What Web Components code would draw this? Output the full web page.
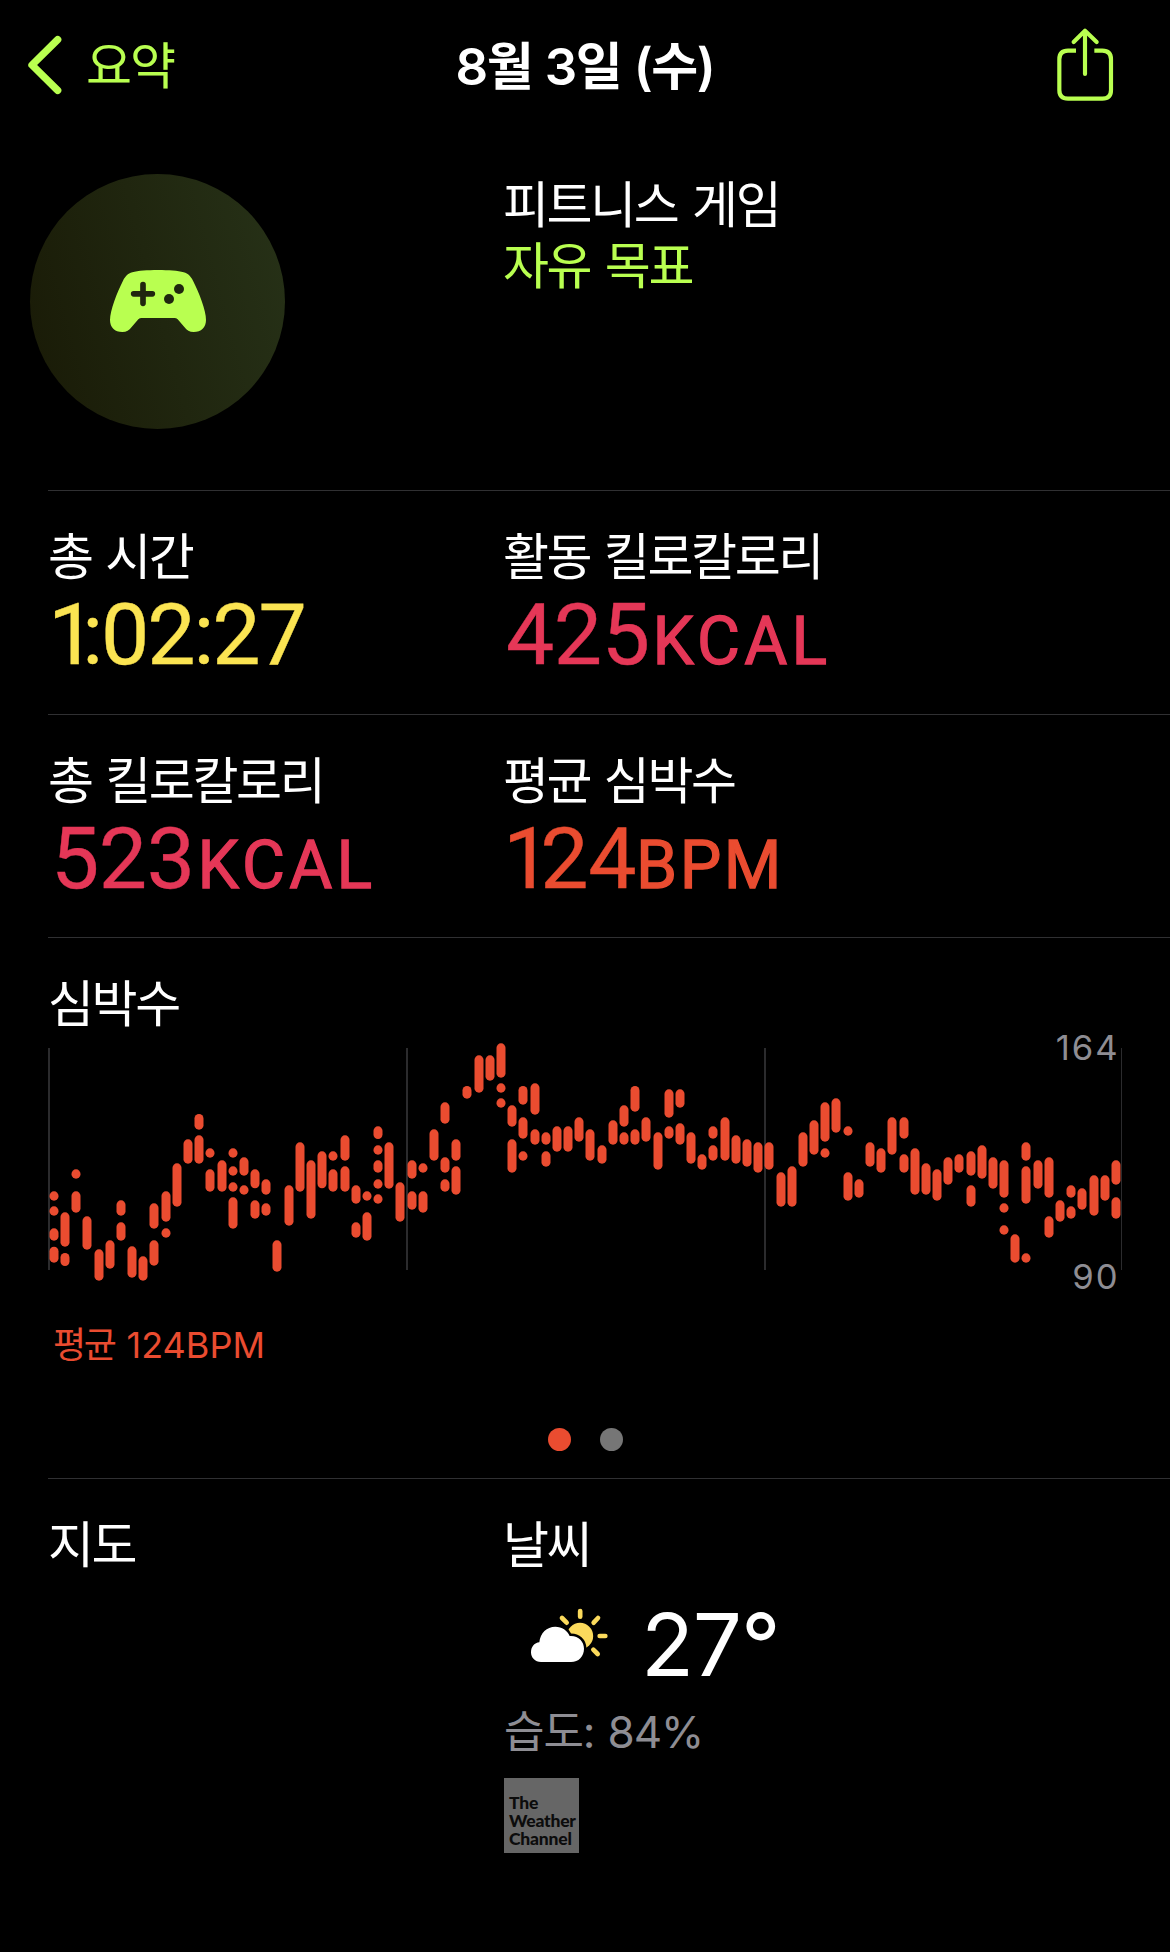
<!DOCTYPE html>
<html lang="ko">
<head>
<meta charset="utf-8">
<title>8월 3일 (수)</title>
<style>
    body {
        margin: 0;
        background: #000;
        color: #fff;
        font-family: Inter, "Noto Sans CJK KR", sans-serif;
        --accent: #b9ff50;
        --yellow: #fbe452;
        --pink: #e53757;
        --orange: #ea4c30;
        --gray: #8e8d93;
        --line: #303032;
    }
</style>
</head>
<body>
<workout-page></workout-page>

<script>
(() => {

    /**
     * Base class: clones the template given by the component in an open shadow root
     */
    class BaseElement extends HTMLElement {
        constructor(){
            super()
            this.root = this.attachShadow({mode: 'open'})
            const template = document.createElement("template")
            template.innerHTML = this.constructor.template
            this.root.appendChild(template.content.cloneNode(true))
        }
    }

    /**
     * @component nav-header
     * Back link, centered title (default slot) and share button
     */
    customElements.define("nav-header", class extends BaseElement {
        static template = `
            <style>
                :host {
                    display: grid;
                    grid-template-columns: 1fr auto 1fr;
                    align-items: center;
                    height: 130px;
                    font-size: 50px;
                    line-height: 60px;
                }

                .back, .share {
                    display: flex;
                    align-items: center;
                    color: var(--accent);
                }

                .back {
                    padding-left: 24px;
                    gap: 22px;
                    letter-spacing: -2px;
                }

                .back slot {
                    display: block;
                    padding-top: 2px;
                }

                .share {
                    justify-content: flex-end;
                    padding-right: 53px;
                }

                .title {
                    padding-top: 3px;
                    font-size: 51px;
                    font-weight: 600;
                    letter-spacing: -1.4px;
                    word-spacing: 1px;
                }

                svg {
                    display: block;
                    fill: none;
                    stroke: currentColor;
                    stroke-linecap: round;
                    stroke-linejoin: round;
                }
            </style>
            <div class="back">
                <svg width="40" height="64" viewBox="42 41 120 192" stroke-width="22">
                    <path d="M143 61 66 137l77 76"/>
                </svg>
                <slot name="back"></slot>
            </div>
            <div class="title"><slot></slot></div>
            <div class="share">
                <svg width="64" height="80" viewBox="39 28 192 240" stroke-width="12.5">
                    <path d="M135 46v129M101 79l34-34 35 34"/>
                    <path stroke-linecap="butt" d="M108 105H84q-26 0-26 26v92q0 26 26 26h103q26 0 26-26v-92q0-26-26-26h-24"/>
                </svg>
            </div>
        `
    })

    /**
     * @component workout-hero
     * Round activity badge with the workout name and its goal
     */
    customElements.define("workout-hero", class extends BaseElement {
        static template = `
            <style>
                :host {
                    display: grid;
                    grid-template-columns: 473px 1fr;
                    height: 360px;
                    padding: 44px 0 0 30px;
                    box-sizing: border-box;
                    font-size: 50px;
                    line-height: 61px;
                    letter-spacing: -2.4px;
                    word-spacing: 3px;
                }

                .badge {
                    display: flex;
                    align-items: center;
                    justify-content: center;
                    width: 255px;
                    height: 255px;
                    border-radius: 50%;
                    background: linear-gradient(75deg, #191a06, #273218);
                }

                .names {
                    padding-top: 1px;
                }

                .goal {
                    color: var(--accent);
                }
            </style>
            <div class="badge">
                <svg width="98" height="64" viewBox="57 60 294 192">
                    <path fill="#b9ff50" d="M204 60c32 0 60 2 77 7 14 4 21 12 28 25 18 36 39 88 39 118 0 22-14 36-37 36-13 0-20-5-28-15l-20-23q-4-4-10-4h-98q-6 0-10 4l-20 23c-8 10-15 15-28 15-23 0-37-14-37-36 0-30 21-82 39-118 7-13 14-21 28-25 17-5 45-7 77-7z"/>
                    <path fill="none" stroke="#20260f" stroke-width="17" stroke-linecap="round" d="M131 131.500h56M159 104v56"/>
                    <circle fill="#20260f" cx="237" cy="147" r="15"/>
                    <circle fill="#20260f" cx="267" cy="117" r="15"/>
                </svg>
            </div>
            <div class="names">
                <div><slot></slot></div>
                <div class="goal"><slot name="goal"></slot></div>
            </div>
        `
    })

    /**
     * @component detail-section
     * Block with a separator on top, its children flow in two columns
     */
    customElements.define("detail-section", class extends BaseElement {
        static template = `
            <style>
                :host {
                    display: grid;
                    grid-template-columns: 455px 1fr;
                    align-content: start;
                    height: 223.5px;
                    margin-left: 48px;
                    padding-top: 36px;
                    box-sizing: border-box;
                    border-top: 1px solid var(--line);
                }

                :host([wide]) {
                    display: block;
                    height: 541px;
                }

                :host([last]) {
                    height: 474px;
                }
            </style>
            <slot></slot>
        `
    })

    customElements.define("section-label", class extends BaseElement {
        static template = `
            <style>
                :host {
                    display: block;
                    font-size: 50px;
                    line-height: 60px;
                    letter-spacing: -2.4px;
                    word-spacing: 2px;
                    white-space: nowrap;
                }
            </style>
            <slot></slot>
        `
    })

    /**
     * @component metric-cell
     * Label (slot "label"), value (default slot) and smaller unit (slot "unit")
     */
    customElements.define("metric-cell", class extends BaseElement {
        static template = `
            <style>
                :host {
                    display: block;
                }

                .value {
                    margin-top: 6px;
                    font-family: Roboto, sans-serif;
                    font-size: 86px;
                    line-height: 84px;
                    letter-spacing: -0.5px;
                    white-space: nowrap;
                    -webkit-text-stroke: 0.4px currentColor;
                }

                .unit {
                    font-size: 66px;
                    line-height: 1;
                    letter-spacing: 2.5px;
                    -webkit-text-stroke-width: 1.3px;
                }

                :host([tone=yellow]) .value {
                    color: var(--yellow);
                    letter-spacing: -2.1px;
                }

                :host([tone=orange]) .value { color: var(--orange); }

                :host([tone=pink]) .value {
                    padding-left: 3px;
                    color: var(--pink);
                }

                :host([tone=pink]) .unit {
                    margin-left: 3px;
                    letter-spacing: 4.2px;
                }
            </style>
            <section-label><slot name="label"></slot></section-label>
            <div class="value"><slot></slot><span class="unit"><slot name="unit"></slot></span></div>
        `
    })

    // one entry per time slice: list of [top, bottom] ranges, in chart units
    const HEART_RATE = [
        [[514,542],[559,587],[625,662],[680,728]], [[577,680],[699,738]], [[448,476],[514,578]], [[589,689]],
        [[688,782]], [[661,746]], [[541,587],[607,662]], [[679,773]],
        [[709,782]], [[550,626],[661,737]], [[514,605],[625,653]], [[430,560]],
        [[358,431]], [[282,329],[346,431]], [[385,413],[448,515]], [[421,515]],
        [[385,413],[439,467],[487,515],[532,626]], [[412,467],[496,524]], [[448,505],[541,596]], [[478,524],[550,587]],
        [[661,755]], [[496,617]], [[367,515]], [[421,596]],
        [[394,505]], [[394,422],[448,515]], [[346,422],[439,515]], [[496,551],[607,653]],
        [[514,542],[577,662]], [[319,357],[376,404],[421,458],[478,506],[523,551]], [[367,506]], [[487,605]],
        [[421,476],[514,569]], [[430,458],[514,578]], [[328,422]], [[247,311],[412,458],[478,515]],
        [[358,422],[439,524]], [[198,236]], [[106,218]], [[106,182]],
        [[70,173],[190,218],[235,263]], [[256,320],[358,458]], [[198,254],[292,356],[394,422]], [[190,284],[328,374]],
        [[337,374],[394,440]], [[319,395]], [[319,395]], [[292,365]],
        [[328,422]], [[376,431]], [[301,374]], [[256,320],[337,374]],
        [[198,275],[328,374]], [[292,365]], [[337,449]], [[208,293],[319,356]],
        [[208,263],[310,374]], [[337,431]], [[403,449]], [[319,356],[376,422]],
        [[292,422]], [[346,431]], [[358,440]], [[367,458]],
        [[367,449]], [[457,560]], [[439,560]], [[337,440]],
        [[301,404]], [[247,365],[385,413]], [[235,338]], [[319,347],[457,542]],
        [[478,533]], [[367,440]], [[385,458]], [[292,404]],
        [[292,356],[403,458]], [[385,524]], [[430,524]], [[448,542]],
        [[412,494]], [[403,458]], [[394,467],[496,560]], [[376,476]],
        [[412,506]], [[421,533],[550,578],[616,644]], [[643,728]], [[367,422],[439,551],[700,728]],
        [[421,506]], [[412,533],[589,653]], [[541,605]], [[496,533],[559,596]],
        [[505,569]], [[466,587]], [[466,542]], [[421,494],[532,596]]
    ]

    /**
     * @component heart-rate-chart
     * Range bars over the workout; attributes max and min label the axis
     */
    customElements.define("heart-rate-chart", class extends BaseElement {
        static template = `
            <style>
                :host {
                    display: block;
                }

                svg {
                    display: block;
                    overflow: visible;
                }

                .grid rect { fill: #2b2b2d; }
                .bars { fill: var(--orange); }

                text {
                    fill: var(--gray);
                    font-family: Inter, sans-serif;
                    font-size: 104px;
                    letter-spacing: 6px;
                    text-anchor: end;
                }

                .caption {
                    margin: 19px 0 0 5px;
                    color: var(--orange);
                    font-size: 36px;
                    line-height: 44px;
                    word-spacing: 2px;
                }

                .caption slot[name=name] {
                    letter-spacing: -2.4px;
                }
            </style>
            <svg width="1122" height="270" viewBox="0 42 3366 810">
                <g class="grid">
                    <rect x="0" y="84" width="6" height="666"/>
                    <rect x="1074" y="84" width="6" height="666"/>
                    <rect x="2148" y="84" width="6" height="666"/>
                    <rect x="3219" y="84" width="3" height="666"/>
                </g>
                <g class="bars"></g>
                <text class="max" x="3215" y="120"></text>
                <text class="min" x="3215" y="807"></text>
            </svg>
            <div class="caption"><slot name="name"></slot> <slot></slot></div>
        `

        connectedCallback(){
            this.root.querySelector(".max").textContent = this.getAttribute("max")
            this.root.querySelector(".min").textContent = this.getAttribute("min")
            this.root.querySelector(".bars").innerHTML = HEART_RATE.map((ranges, i) => {
                const x = Math.round((17.5 + i * 33.54) / 3) * 3 - 13.5
                return ranges.map(([top, bottom]) =>
                    `<rect x="${x}" y="${top}" width="27" height="${bottom - top}" rx="13.5"/>`
                ).join("")
            }).join("")
        }
    })

    customElements.define("page-dots", class extends BaseElement {
        static template = `
            <style>
                :host {
                    display: flex;
                    justify-content: center;
                    gap: 29px;
                    margin: 61px 48px 0 0;
                }

                i {
                    width: 23px;
                    height: 23px;
                    border-radius: 50%;
                    background: #767676;
                }

                .current {
                    background: var(--orange);
                }
            </style>
            <i class="current"></i><i></i>
        `
    })

    /**
     * @component weather-card
     * Condition icon, temperature, humidity and the data provider
     */
    customElements.define("weather-card", class extends BaseElement {
        static template = `
            <style>
                :host {
                    display: block;
                }

                .now {
                    display: flex;
                    margin: 20px 0 0 1px;
                    gap: 13px;
                    font-size: 87px;
                    line-height: 100px;
                    letter-spacing: -1.2px;
                }

                .humidity {
                    margin: 10px 0 0 1px;
                    color: var(--gray);
                    font-size: 44px;
                    line-height: 54px;
                    letter-spacing: -1.1px;
                    word-spacing: 2px;
                }

                .provider {
                    width: 75px;
                    height: 75px;
                    margin: 19px 0 0 1px;
                    padding: 16px 0 0 5px;
                    box-sizing: border-box;
                    background: #666;
                    color: #0c0c0c;
                    font: 900 17.5px/18px Lato, sans-serif;
                    letter-spacing: -0.2px;
                }
            </style>
            <section-label><slot></slot></section-label>
            <div class="now">
                <svg width="124" height="100" viewBox="72 345 372 300">
                    <g stroke="#fbda5c" stroke-width="14" stroke-linecap="round">
                        <path d="M300.500 393v17M354 414l-13 14M376 468h-17M353 522l-13-13M246 414l14 14"/>
                    </g>
                    <circle cx="300" cy="468" r="39.500" fill="#fbda5c"/>
                    <path fill="#fff" stroke="#000" stroke-width="15" paint-order="stroke" d="M183 546c-18 0-30-13-30-29 0-17 11-29 25-30 3-28 22-47 48-47 20 0 36 11 43 28 26-2 43 16 43 38 0 23-16 40-39 40z"/>
                </svg>
                <span><slot name="temperature"></slot></span>
            </div>
            <div class="humidity"><slot name="humidity"></slot></div>
            <div class="provider">The<br>Weather<br>Channel</div>
        `
    })

    customElements.define("workout-page", class extends BaseElement {
        static template = `
            <style>
                :host {
                    display: block;
                    width: 1170px;
                    height: 1952px;
                    overflow: hidden;
                }

                /* the leading 1 sits closer to what follows */
                .one {
                    letter-spacing: -11px;
                }

                .one.tight {
                    letter-spacing: -14px;
                }
            </style>
            <nav-header><span slot="back">요약</span>8월 3일 (수)</nav-header>
            <workout-hero>피트니스 게임<span slot="goal">자유 목표</span></workout-hero>
            <detail-section>
                <metric-cell tone="yellow"><span slot="label">총 시간</span><span class="one tight">1</span>:02:27</metric-cell>
                <metric-cell tone="pink"><span slot="label">활동 킬로칼로리</span>425<span slot="unit">KCAL</span></metric-cell>
            </detail-section>
            <detail-section>
                <metric-cell tone="pink"><span slot="label">총 킬로칼로리</span>523<span slot="unit">KCAL</span></metric-cell>
                <metric-cell tone="orange"><span slot="label">평균 심박수</span><span class="one">1</span>24<span slot="unit">BPM</span></metric-cell>
            </detail-section>
            <detail-section wide>
                <section-label>심박수</section-label>
                <heart-rate-chart max="164" min="90"><span slot="name">평균</span>124BPM</heart-rate-chart>
                <page-dots></page-dots>
            </detail-section>
            <detail-section last>
                <section-label>지도</section-label>
                <weather-card>날씨<span slot="temperature">27°</span><span slot="humidity">습도: 84%</span></weather-card>
            </detail-section>
        `
    })

})()
</script>
</body>
</html>
